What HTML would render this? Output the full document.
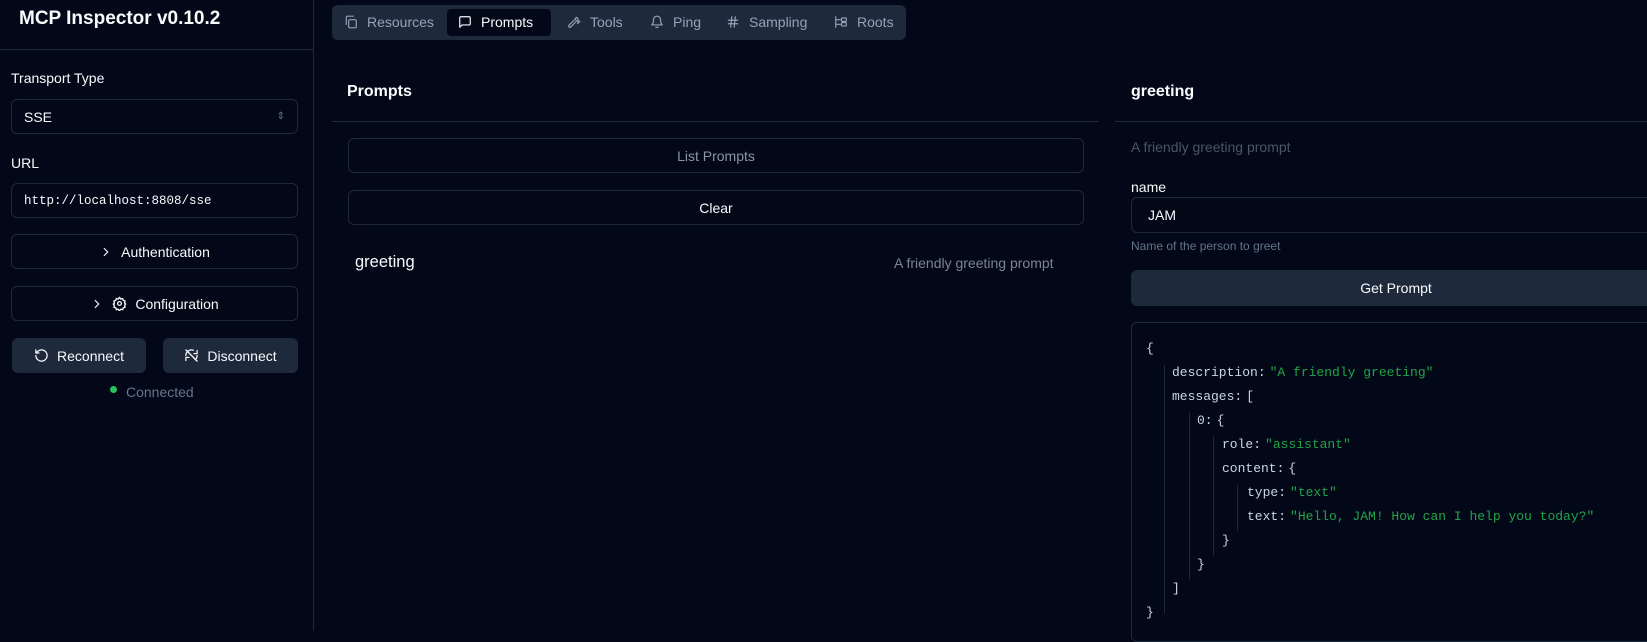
<!DOCTYPE html>
<html><head><meta charset="utf-8"><style>
*{box-sizing:border-box;margin:0;padding:0}
body{width:1647px;height:631px;overflow:hidden;background:#020817;color:#f8fafc;font-family:"Liberation Sans",sans-serif;font-size:14px;position:relative}
.a{position:absolute}
.btn{position:absolute;border:1px solid #1e293b;border-radius:6px;display:flex;align-items:center;justify-content:center;gap:8px}
.sec{background:#1e293b;border:none}
.mono{font-family:"Liberation Mono",monospace}
.m{color:#64748b}
svg{stroke:currentColor;fill:none;stroke-width:2;stroke-linecap:round;stroke-linejoin:round}
.j{position:absolute;font-family:"Liberation Mono",monospace;font-size:13px;color:#cbd5e1;white-space:pre}
.s{color:#22a34a;margin-left:4px}
.g{position:absolute;width:1px;background:#1e293b}
.tab{display:flex;align-items:center;gap:9px}
</style></head><body>
<div class="a" style="left:0;top:0;width:314px;height:631px;border-right:1px solid #1e293b"></div>
<div class="a" style="left:0;top:49px;width:314px;height:1px;background:#1e293b"></div>
<div class="a" style="left:19px;top:8px;font-size:19px;font-weight:bold">MCP Inspector v0.10.2</div>
<div class="a" style="left:11px;top:70px">Transport Type</div>
<div class="btn" style="left:11px;top:99px;width:287px;height:35px;justify-content:space-between;padding:0 12px"><span>SSE</span><span class="m" style="font-size:10px">⇕</span></div>
<div class="a" style="left:11px;top:155px">URL</div>
<div class="btn mono" style="left:11px;top:183px;width:287px;height:35px;justify-content:flex-start;padding:0 12px;font-size:12.5px">http://localhost:8808/sse</div>
<div class="btn" style="left:11px;top:234px;width:287px;height:35px"><svg width="14" height="14" viewBox="0 0 24 24"><path d="M9 6l6 6-6 6"/></svg>Authentication</div>
<div class="btn" style="left:11px;top:286px;width:287px;height:35px"><svg width="14" height="14" viewBox="0 0 24 24"><path d="M9 6l6 6-6 6"/></svg><svg width="15" height="15" viewBox="0 0 24 24"><circle cx="12" cy="12" r="3"/><path d="M12 2l2 3 3-1 1 3 3 1-1 3 2 2-2 2 1 3-3 1-1 3-3-1-2 3-2-3-3 1-1-3-3-1 1-3-2-2 2-2-1-3 3-1 1-3 3 1z"/></svg>Configuration</div>
<div class="btn sec" style="left:12px;top:338px;width:134px;height:35px"><svg width="15" height="15" viewBox="0 0 24 24"><path d="M3 12a9 9 0 1 0 3-6.7L3 8"/><path d="M3 3v5h5"/></svg>Reconnect</div>
<div class="btn sec" style="left:163px;top:338px;width:135px;height:35px"><svg width="15" height="15" viewBox="0 0 24 24"><path d="M3 3l18 18"/><path d="M21 12a9 9 0 0 1-3 6.7M3 12a9 9 0 0 1 12-8.5"/><path d="M21 4v5h-5M3 20v-5h5"/></svg>Disconnect</div>
<div class="a" style="left:110px;top:386px;width:7px;height:7px;border-radius:50%;background:#22c55e"></div>
<div class="a m" style="left:126px;top:384px">Connected</div>

<div class="a" style="left:332px;top:5px;width:574px;height:35px;background:#1e293b;border-radius:6px"></div>
<div class="a" style="left:447px;top:9px;width:104px;height:27px;background:#020817;border-radius:4px"></div>
<div class="a" style="left:344px;top:14px;display:flex;color:#94a3b8;font-size:14px">
<span class="tab" style="width:114px"><svg width="14" height="14" viewBox="0 0 24 24"><rect x="8" y="8" width="13" height="14" rx="2"/><path d="M4 16V4a2 2 0 0 1 2-2h10"/></svg>Resources</span>
<span class="tab" style="width:109px;color:#f8fafc"><svg width="14" height="14" viewBox="0 0 24 24"><path d="M21 15a2 2 0 0 1-2 2H7l-4 4V5a2 2 0 0 1 2-2h14a2 2 0 0 1 2 2z"/></svg>Prompts</span>
<span class="tab" style="width:83px"><svg width="14" height="14" viewBox="0 0 24 24"><path d="M15 12l-8.5 8.5a2 2 0 0 1-3-3L12 9M18 15l4-4M21.5 11.5l-1.9-1.9a3 3 0 0 1-.9-2.1V6.3L16.5 4l-3 3 6 6"/></svg>Tools</span>
<span class="tab" style="width:76px"><svg width="14" height="14" viewBox="0 0 24 24"><path d="M6 8a6 6 0 0 1 12 0c0 7 3 9 3 9H3s3-2 3-9M10 21h4"/></svg>Ping</span>
<span class="tab" style="width:108px"><svg width="14" height="14" viewBox="0 0 24 24"><path d="M4 9h16M4 15h16M10 3L8 21M16 3l-2 18"/></svg>Sampling</span>
<span class="tab"><svg width="14" height="14" viewBox="0 0 24 24"><path d="M3 3v18M3 8h8M3 16h8"/><rect x="13" y="5" width="8" height="6" rx="1"/><rect x="13" y="13" width="8" height="6" rx="1"/></svg>Roots</span>
</div>

<div class="a" style="left:347px;top:83px;font-size:16px;font-weight:bold">Prompts</div>
<div class="a" style="left:332px;top:121px;width:767px;height:1px;background:#1e293b"></div>
<div class="btn m" style="left:348px;top:138px;width:736px;height:35px;color:#8b95a5">List Prompts</div>
<div class="btn" style="left:348px;top:190px;width:736px;height:35px">Clear</div>
<div class="a" style="left:355px;top:253px;font-size:16.5px">greeting</div>
<div class="a m" style="left:894px;top:255px;font-size:14px;color:#7b8494">A friendly greeting prompt</div>

<div class="a" style="left:1131px;top:83px;font-size:16px;font-weight:bold">greeting</div>
<div class="a" style="left:1115px;top:121px;width:532px;height:1px;background:#1e293b"></div>
<div class="a m" style="left:1131px;top:139px;color:#4b5563">A friendly greeting prompt</div>
<div class="a" style="left:1131px;top:179px">name</div>
<div class="btn" style="left:1131px;top:197px;width:530px;height:36px;justify-content:flex-start;padding:0 16px">JAM</div>
<div class="a m" style="left:1131px;top:239px;font-size:12px">Name of the person to greet</div>
<div class="btn sec" style="left:1131px;top:270px;width:530px;height:36px">Get Prompt</div>
<div class="a" style="left:1131px;top:322px;width:530px;height:320px;border:1px solid #1e293b;border-radius:6px"></div>
<div class="g" style="left:1164px;top:365px;height:248px"></div>
<div class="g" style="left:1189px;top:412px;height:168px"></div>
<div class="g" style="left:1213px;top:436px;height:120px"></div>
<div class="g" style="left:1237px;top:485px;height:46px"></div>
<div class="j" style="left:1146px;top:341px">{</div>
<div class="j" style="left:1172px;top:365px">description:<span class="s">"A friendly greeting"</span></div>
<div class="j" style="left:1172px;top:389px">messages:<span style="margin-left:4px">[</span></div>
<div class="j" style="left:1197px;top:413px">0:<span style="margin-left:4px">{</span></div>
<div class="j" style="left:1222px;top:437px">role:<span class="s">"assistant"</span></div>
<div class="j" style="left:1222px;top:461px">content:<span style="margin-left:4px">{</span></div>
<div class="j" style="left:1247px;top:485px">type:<span class="s">"text"</span></div>
<div class="j" style="left:1247px;top:509px">text:<span class="s">"Hello, JAM! How can I help you today?"</span></div>
<div class="j" style="left:1222px;top:533px">}</div>
<div class="j" style="left:1197px;top:557px">}</div>
<div class="j" style="left:1172px;top:581px">]</div>
<div class="j" style="left:1146px;top:605px">}</div>
</body></html>
